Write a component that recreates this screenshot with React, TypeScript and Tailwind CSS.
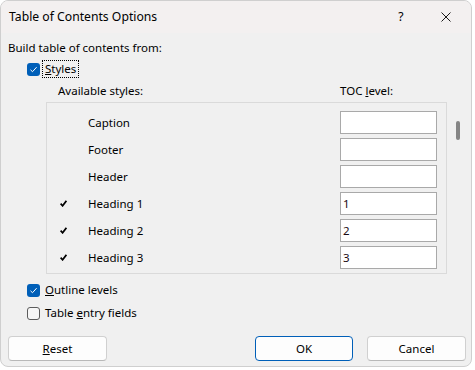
import React from "react";

const font = "font-['Segoe_UI','Noto_Sans',sans-serif]";

function CheckBox({ checked }: { checked: boolean }) {
  return checked ? (
    <div className="w-[13px] h-[13px] rounded-[3px] bg-[#005fb8] flex items-center justify-center shrink-0">
      <svg width="9" height="9" viewBox="0 0 9 9">
        <path d="M1.5 4.8 L3.5 6.7 L7.6 2.2" stroke="#fff" strokeWidth="1" fill="none" />
      </svg>
    </div>
  ) : (
    <div className="w-[13px] h-[13px] rounded-[3px] border border-[#5c5c5c] bg-[#f7f7f7] shrink-0" />
  );
}

function Tick() {
  return (
    <svg width="7" height="7" viewBox="0 0 7 7">
      <path d="M0.6 3.6 L2.6 5.8 L6.4 0.8" stroke="#000" strokeWidth="1.7" fill="none" />
    </svg>
  );
}

const rows: { name: string; level: string; tick: boolean }[] = [
  { name: "Caption", level: "", tick: false },
  { name: "Footer", level: "", tick: false },
  { name: "Header", level: "", tick: false },
  { name: "Heading 1", level: "1", tick: true },
  { name: "Heading 2", level: "2", tick: true },
  { name: "Heading 3", level: "3", tick: true },
];

export default function App() {
  return (
    <div className={`w-[475px] h-[370px] bg-white ${font} text-[11.5px] text-black leading-[16px]`}>
      <div className="w-[472px] h-[367px] border border-[#cfcfcf] rounded-[8px] overflow-hidden bg-[#f0f0f0] flex flex-col">
        <div className="h-[32px] bg-[#f3f0f0] flex items-center shrink-0 text-[12.2px]">
          <div className="pl-[8px] flex-1">Table of Contents Options</div>
          <div className="w-[20px] text-center mr-[30px]">?</div>
          <div className="w-[10px] mr-[20px] flex items-center">
            <svg width="10" height="10" viewBox="0 0 10 10">
              <path d="M0.5 0.5 L9.5 9.5 M9.5 0.5 L0.5 9.5" stroke="#1a1a1a" strokeWidth="1" fill="none" />
            </svg>
          </div>
        </div>
        <div className="flex flex-col pl-[7px]">
          <div className="mt-[7px] h-[16px] flex items-center">Build table of contents from:</div>
          <div className="mt-[4px] h-[18px] flex items-center pl-[19px]">
            <CheckBox checked />
            <div className="ml-[2px] h-[18px] border border-dotted border-black px-[2px] flex items-center">
              <span><u>S</u>tyles</span>
            </div>
          </div>
          <div className="mt-[5px] h-[16px] flex items-center">
            <div className="pl-[50px] w-[332px]">Available styles:</div>
            <div>TOC <u>l</u>evel:</div>
          </div>
          <div className="mt-[3px] flex pl-[38px]">
            <div className="w-[401px] h-[172px] border border-[#dadada] overflow-hidden pt-[6px]">
              {rows.map((r) => (
                <div key={r.name} className="h-[27px] flex items-center">
                  <div className="w-[41px] pl-[13px] flex items-center">{r.tick ? <Tick /> : null}</div>
                  <div className="w-[252px]">{r.name}</div>
                  <div className="w-[97px] h-[23px] border border-[#a9a9a9] bg-white flex items-center pl-[2px] text-[#1a0a14]">
                    {r.level}
                  </div>
                </div>
              ))}
            </div>
            <div className="w-[20px] pl-[9px] pt-[19px]">
              <div className="w-[4px] h-[19px] rounded-[2px] bg-[#858585]" />
            </div>
          </div>
          <div className="mt-[8px] h-[16px] flex items-center pl-[19px]">
            <CheckBox checked />
            <span className="ml-[5px]"><u>O</u>utline levels</span>
          </div>
          <div className="mt-[7px] h-[16px] flex items-center pl-[19px]">
            <CheckBox checked={false} />
            <span className="ml-[5px]">Table <u>e</u>ntry fields</span>
          </div>
          <div className="mt-[15px] h-[25px] flex items-center">
            <button className="w-[99px] h-[25px] bg-[#fdfdfd] border border-[#d0d0d0] border-b-[#b8b8b8] rounded-[4px]">
              <u>R</u>eset
            </button>
            <button className="ml-[148px] w-[98px] h-[25px] bg-[#fdfdfd] border border-[#005fb8] rounded-[4px]">
              OK
            </button>
            <button className="ml-[14px] w-[99px] h-[25px] bg-[#fdfdfd] border border-[#d0d0d0] border-b-[#b8b8b8] rounded-[4px]">
              Cancel
            </button>
          </div>
        </div>
      </div>
    </div>
  );
}
